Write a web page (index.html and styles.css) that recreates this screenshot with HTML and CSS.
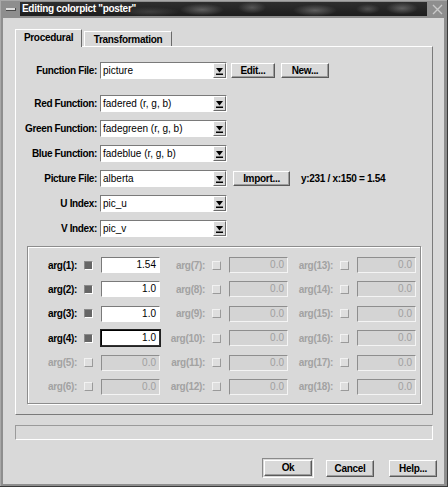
FILE: index.html
```html
<!DOCTYPE html>
<html>
<head>
<meta charset="utf-8">
<title>Editing colorpict "poster"</title>
<link rel="stylesheet" href="styles.css">
</head>
<body>
<div class="frame">
  <div class="titlebar">
    <div class="tb-menu"><span></span></div>
    <div class="tb-title">Editing colorpict "poster"</div>
    <div class="tb-close">
      <svg width="11" height="11" viewBox="0 0 11 11"><path d="M1 1 L10 10 M10 1 L1 10" stroke="#c9c9c9" stroke-width="1.4" fill="none"/></svg>
    </div>
  </div>
  <div class="client">
    <div class="tabs">
      <div class="tab active">Procedural</div>
      <div class="tab">Transformation</div>
    </div>
    <div class="panel">
      <div class="row first">
        <div class="lbl">Function File:</div>
        <div class="dd"><div class="val">picture</div><div class="arr"><svg width="7" height="7" viewBox="0 0 7 7"><polygon points="0,0 7,0 3.5,4.5" fill="#000"/><rect x="0" y="5.5" width="7" height="1.5" fill="#000"/></svg></div></div>
        <div class="btn sm edit">Edit...</div>
        <div class="btn sm new">New...</div>
      </div>
      <div class="row">
        <div class="lbl">Red Function:</div>
        <div class="dd"><div class="val">fadered (r, g, b)</div><div class="arr"><svg width="7" height="7" viewBox="0 0 7 7"><polygon points="0,0 7,0 3.5,4.5" fill="#000"/><rect x="0" y="5.5" width="7" height="1.5" fill="#000"/></svg></div></div>
      </div>
      <div class="row">
        <div class="lbl">Green Function:</div>
        <div class="dd"><div class="val">fadegreen (r, g, b)</div><div class="arr"><svg width="7" height="7" viewBox="0 0 7 7"><polygon points="0,0 7,0 3.5,4.5" fill="#000"/><rect x="0" y="5.5" width="7" height="1.5" fill="#000"/></svg></div></div>
      </div>
      <div class="row">
        <div class="lbl">Blue Function:</div>
        <div class="dd"><div class="val">fadeblue (r, g, b)</div><div class="arr"><svg width="7" height="7" viewBox="0 0 7 7"><polygon points="0,0 7,0 3.5,4.5" fill="#000"/><rect x="0" y="5.5" width="7" height="1.5" fill="#000"/></svg></div></div>
      </div>
      <div class="row">
        <div class="lbl">Picture File:</div>
        <div class="dd"><div class="val">alberta</div><div class="arr"><svg width="7" height="7" viewBox="0 0 7 7"><polygon points="0,0 7,0 3.5,4.5" fill="#000"/><rect x="0" y="5.5" width="7" height="1.5" fill="#000"/></svg></div></div>
        <div class="btn sm import">Import...</div>
        <div class="ratio">y:231 / x:150 = 1.54</div>
      </div>
      <div class="row">
        <div class="lbl">U Index:</div>
        <div class="dd"><div class="val">pic_u</div><div class="arr"><svg width="7" height="7" viewBox="0 0 7 7"><polygon points="0,0 7,0 3.5,4.5" fill="#000"/><rect x="0" y="5.5" width="7" height="1.5" fill="#000"/></svg></div></div>
      </div>
      <div class="row">
        <div class="lbl">V Index:</div>
        <div class="dd"><div class="val">pic_v</div><div class="arr"><svg width="7" height="7" viewBox="0 0 7 7"><polygon points="0,0 7,0 3.5,4.5" fill="#000"/><rect x="0" y="5.5" width="7" height="1.5" fill="#000"/></svg></div></div>
      </div>

      <div class="args">
        <div class="arg"><div class="alb">arg(1):</div><div class="cb on"></div><div class="fld">1.54</div></div>
        <div class="arg"><div class="alb">arg(2):</div><div class="cb on"></div><div class="fld">1.0</div></div>
        <div class="arg"><div class="alb">arg(3):</div><div class="cb on"></div><div class="fld">1.0</div></div>
        <div class="arg"><div class="alb">arg(4):</div><div class="cb on"></div><div class="fld focus">1.0</div></div>
        <div class="arg off"><div class="alb">arg(5):</div><div class="cb"></div><div class="fld">0.0</div></div>
        <div class="arg off"><div class="alb">arg(6):</div><div class="cb"></div><div class="fld">0.0</div></div>
        <div class="arg off"><div class="alb">arg(7):</div><div class="cb"></div><div class="fld">0.0</div></div>
        <div class="arg off"><div class="alb">arg(8):</div><div class="cb"></div><div class="fld">0.0</div></div>
        <div class="arg off"><div class="alb">arg(9):</div><div class="cb"></div><div class="fld">0.0</div></div>
        <div class="arg off"><div class="alb">arg(10):</div><div class="cb"></div><div class="fld">0.0</div></div>
        <div class="arg off"><div class="alb">arg(11):</div><div class="cb"></div><div class="fld">0.0</div></div>
        <div class="arg off"><div class="alb">arg(12):</div><div class="cb"></div><div class="fld">0.0</div></div>
        <div class="arg off"><div class="alb">arg(13):</div><div class="cb"></div><div class="fld">0.0</div></div>
        <div class="arg off"><div class="alb">arg(14):</div><div class="cb"></div><div class="fld">0.0</div></div>
        <div class="arg off"><div class="alb">arg(15):</div><div class="cb"></div><div class="fld">0.0</div></div>
        <div class="arg off"><div class="alb">arg(16):</div><div class="cb"></div><div class="fld">0.0</div></div>
        <div class="arg off"><div class="alb">arg(17):</div><div class="cb"></div><div class="fld">0.0</div></div>
        <div class="arg off"><div class="alb">arg(18):</div><div class="cb"></div><div class="fld">0.0</div></div>
      </div>
    </div>
    <div class="status"></div>
    <div class="buttons">
      <div class="default"><div class="btn ok">Ok</div></div>
      <div class="btn cancel">Cancel</div>
      <div class="btn help">Help...</div>
    </div>
  </div>
</div>
</body>
</html>
```

FILE: styles.css
```css
* { box-sizing: border-box; }
html, body { margin: 0; padding: 0; }
body {
  width: 448px;
  height: 487px;
  overflow: hidden;
  background: #8e8e8e;
  font-family: "Liberation Sans", Arial, sans-serif;
  font-size: 10px;
  color: #000;
}
.frame {
  width: 448px;
  height: 487px;
  display: flex;
  flex-direction: column;
  background: #8e8e8e;
  box-shadow: inset -1px -1px 0 #3a3a3a, inset 1px 1px 0 #a8a8a8;
}

/* title bar */
.titlebar {
  height: 18px;
  flex: none;
  display: flex;
  align-items: flex-start;
}
.tb-menu {
  width: 20px;
  height: 18px;
  display: flex;
  align-items: center;
  padding-left: 6px;
}
.tb-menu span {
  display: block;
  width: 10px;
  height: 3px;
  background: #dedede;
  border-bottom: 1px solid #4a4a4a;
  border-right: 1px solid #4a4a4a;
}
.tb-title {
  flex: 1;
  height: 14px;
  margin-top: 2px;
  padding-left: 2px;
  color: #fff;
  font-weight: bold;
  letter-spacing: -0.3px;
  line-height: 14px;
  background:
    radial-gradient(ellipse 22px 6px at 182px 55%, rgba(140,140,140,0.55), rgba(140,140,140,0) 100%),
    radial-gradient(ellipse 14px 6px at 232px 40%, rgba(130,130,130,0.5), rgba(130,130,130,0) 100%),
    radial-gradient(ellipse 22px 6px at 295px 60%, rgba(140,140,140,0.55), rgba(140,140,140,0) 100%),
    radial-gradient(ellipse 12px 5px at 348px 50%, rgba(120,120,120,0.5), rgba(120,120,120,0) 100%),
    radial-gradient(ellipse 16px 6px at 382px 45%, rgba(140,140,140,0.55), rgba(140,140,140,0) 100%),
    radial-gradient(ellipse 30px 5px at 130px 70%, rgba(90,90,90,0.5), rgba(90,90,90,0) 100%),
    linear-gradient(#2e2e2e, #1e1e1e);
}
.tb-close {
  width: 21px;
  height: 18px;
  display: flex;
  align-items: center;
  justify-content: center;
}

/* client */
.client {
  flex: 1;
  margin: 0 4px 3px 3px;
  background: #d9d9d9;
  padding: 11px 11px 0 12px;
  display: flex;
  flex-direction: column;
}

.tabs {
  display: flex;
  align-items: flex-end;
  gap: 2px;
  height: 18px;
  margin-bottom: -1px;
  position: relative;
  z-index: 1;
}
.tab {
  height: 15px;
  width: 88px;
  margin-bottom: 1px;
  border: 1px solid;
  border-color: #fff #6a6a6a transparent #fff;
  border-bottom: none;
  background: #d9d9d9;
  font-weight: bold;
  letter-spacing: -0.3px;
  display: flex;
  align-items: center;
  justify-content: center;
}
.tab.active {
  height: 18px;
  width: 67px;
  margin-bottom: 0;
  padding-bottom: 2px;
}

.panel {
  border: 1px solid;
  border-color: #fff #7a7a7a #7a7a7a #fff;
  padding: 15px 0 10px 0;
}
.row {
  display: flex;
  align-items: center;
  height: 17px;
  margin-top: 8px;
}
.row.first { margin-top: 0; margin-bottom: 16px; }
.row.first + .row { margin-top: 0; }
.lbl {
  width: 81px;
  margin-right: 3px;
  text-align: right;
  font-weight: bold;
  letter-spacing: -0.35px;
  white-space: nowrap;
}
.dd {
  width: 127px;
  height: 17px;
  display: flex;
  border: 1px solid;
  border-color: #7a7a7a #fff #fff #7a7a7a;
  background: #fff;
}
.dd .val {
  flex: 1;
  padding-left: 2px;
  line-height: 15px;
  white-space: nowrap;
}
.dd .arr {
  width: 13px;
  height: 15px;
  background: #d9d9d9;
  border: 1px solid;
  border-color: #fff #6a6a6a #6a6a6a #fff;
  display: flex;
  align-items: center;
  justify-content: center;
  padding-top: 1px;
}

.btn {
  height: 17px;
  width: 48px;
  border: 1px solid;
  border-color: #fff #5a5a5a #5a5a5a #fff;
  box-shadow: inset -1px -1px 0 #9c9c9c;
  background: #d9d9d9;
  font-weight: bold;
  letter-spacing: -0.3px;
  display: flex;
  align-items: center;
  justify-content: center;
  white-space: nowrap;
}
.btn.sm { height: 15px; }
.btn.edit { width: 44px; margin-left: 4px; }
.btn.new { width: 48px; margin-left: 6px; }
.btn.import { width: 57px; margin-left: 6px; }
.ratio {
  margin-left: 11px;
  font-weight: bold;
  letter-spacing: -0.3px;
}

/* args group */
.args {
  margin: 9px 11px 0 11px;
  border: 1px solid #8c8c8c;
  box-shadow: 1px 1px 0 #fff, inset 1px 1px 0 #fff;
  padding: 10px 0 8px 9px;
  display: grid;
  grid-template-columns: repeat(3, 123px);
  grid-template-rows: repeat(6, 16px);
  grid-auto-flow: column;
  column-gap: 5px;
  row-gap: 8.4px;
}
.arg {
  display: flex;
  align-items: center;
  height: 16px;
}
.alb {
  width: 40px;
  text-align: right;
  font-weight: bold;
  letter-spacing: -0.3px;
  white-space: nowrap;
}
.cb {
  width: 9px;
  height: 9px;
  margin-left: 7px;
  border: 1px solid;
  border-color: #fff #6e6e6e #6e6e6e #fff;
  background: #dcdcdc;
}
.cb.on {
  border-color: #8a8a8a #fff #fff #8a8a8a;
  background: #666;
}
.fld {
  width: 59px;
  height: 16px;
  margin-left: 8px;
  border: 1px solid;
  border-color: #7a7a7a #fff #fff #7a7a7a;
  background: #fff;
  text-align: right;
  padding-right: 3px;
  line-height: 14px;
}
.fld.focus {
  border-color: #000 #333 #333 #000;
  box-shadow: 0 0 0 1px #222;
}
.arg.off .alb { color: #a2a2a2; }
.arg.off .cb {
  border-color: #f2f2f2 #9a9a9a #9a9a9a #f2f2f2;
  background: #dedede;
}
.arg.off .fld {
  background: #d4d4d4;
  color: #a0a0a0;
  border-color: #8e8e8e #f4f4f4 #f4f4f4 #8e8e8e;
}

.status {
  margin-top: 10px;
  height: 15px;
  flex: none;
  border: 1px solid;
  border-color: #9a9a9a #fff #fff #9a9a9a;
}

.buttons {
  display: flex;
  justify-content: flex-end;
  align-items: flex-start;
  margin-top: 18px;
  margin-right: -4px;
}
.default {
  width: 52px;
  height: 20px;
  border: 1px solid;
  border-color: #8a8a8a #fff #fff #8a8a8a;
  padding: 1px;
}
.btn.ok { width: 48px; height: 16px; }
.btn.cancel { margin-left: 12px; margin-top: 2px; }
.btn.help { margin-left: 15px; margin-top: 2px; }
```
